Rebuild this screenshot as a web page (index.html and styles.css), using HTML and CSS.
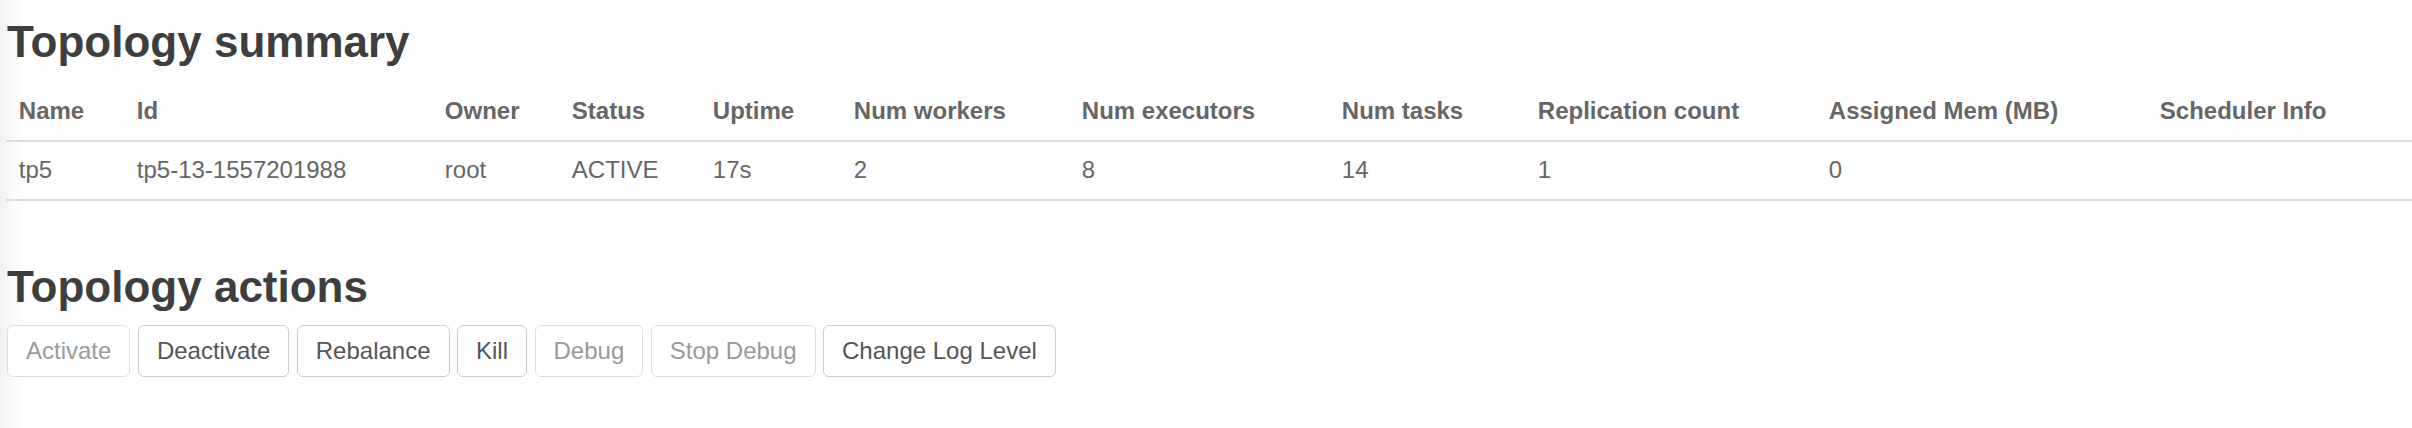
FILE: index.html
```html
<!DOCTYPE html>
<html>
<head>
<meta charset="utf-8">
<title>Topology</title>
<link rel="stylesheet" href="styles.css">
</head>
<body>
<div class="page">
  <h2 class="section-title first">Topology summary</h2>
  <table class="summary">
    <colgroup>
      <col class="c-name"><col class="c-id"><col class="c-owner"><col class="c-status"><col class="c-uptime"><col class="c-workers"><col class="c-exec"><col class="c-tasks"><col class="c-repl"><col class="c-mem"><col class="c-sched">
    </colgroup>
    <thead>
      <tr>
        <th>Name</th><th>Id</th><th>Owner</th><th>Status</th><th>Uptime</th><th>Num workers</th><th>Num executors</th><th>Num tasks</th><th>Replication count</th><th>Assigned Mem (MB)</th><th>Scheduler Info</th>
      </tr>
    </thead>
    <tbody>
      <tr>
        <td>tp5</td><td>tp5-13-1557201988</td><td>root</td><td>ACTIVE</td><td>17s</td><td>2</td><td>8</td><td>14</td><td>1</td><td>0</td><td></td>
      </tr>
    </tbody>
  </table>
  <h2 class="section-title second">Topology actions</h2>
  <div class="actions">
    <button class="btn" disabled>Activate</button>
    <button class="btn">Deactivate</button>
    <button class="btn">Rebalance</button>
    <button class="btn">Kill</button>
    <button class="btn" disabled>Debug</button>
    <button class="btn" disabled>Stop Debug</button>
    <button class="btn">Change Log Level</button>
  </div>
</div>
</body>
</html>
```
FILE: styles.css
```css
html, body {
  margin: 0;
  padding: 0;
}
body {
  width: 2412px;
  height: 428px;
  background: linear-gradient(90deg, #f1f1f1 0px, #fafafa 12px, #ffffff 26px);
  font-family: "Liberation Sans", Arial, Helvetica, sans-serif;
  color: #666;
}
.page {
  padding: 0 12px 0 6px;
}
.section-title {
  font-size: 44px;
  line-height: 48px;
  font-weight: bold;
  color: #3e3e3e;
  margin: 0;
  padding-left: 1px;
}
.section-title.first {
  padding-top: 18px;
  margin-bottom: 16px;
}
.section-title.second {
  margin-top: 62px;
  margin-bottom: 14px;
}
.summary {
  width: 2394px;
  border-collapse: collapse;
  table-layout: fixed;
  font-size: 24px;
  line-height: 32px;
}
.c-name { width: 118px; }
.c-id { width: 308px; }
.c-owner { width: 127px; }
.c-status { width: 141px; }
.c-uptime { width: 141px; }
.c-workers { width: 228px; }
.c-exec { width: 260px; }
.c-tasks { width: 196px; }
.c-repl { width: 291px; }
.c-mem { width: 331px; }
.c-sched { width: 353px; }
.summary th,
.summary td {
  padding: 12.8px 12.8px;
  text-align: left;
  vertical-align: middle;
  white-space: nowrap;
}
.summary th {
  font-weight: bold;
  color: #666;
  border-bottom: 2px solid #dddddd;
}
.summary td {
  color: #666;
  border-bottom: 2px solid #dddddd;
}
.actions {
  display: flex;
  gap: 7.5px;
  padding-left: 1px;
}
.btn {
  font-family: "Liberation Sans", Arial, Helvetica, sans-serif;
  font-size: 24px;
  line-height: 32px;
  padding: 9px 18px;
  background: #fff;
  color: #555;
  border: 1px solid #cccccc;
  border-radius: 6px;
  margin: 0;
}
.btn:disabled {
  color: #9a9a9a;
  border-color: #dedede;
}
```
